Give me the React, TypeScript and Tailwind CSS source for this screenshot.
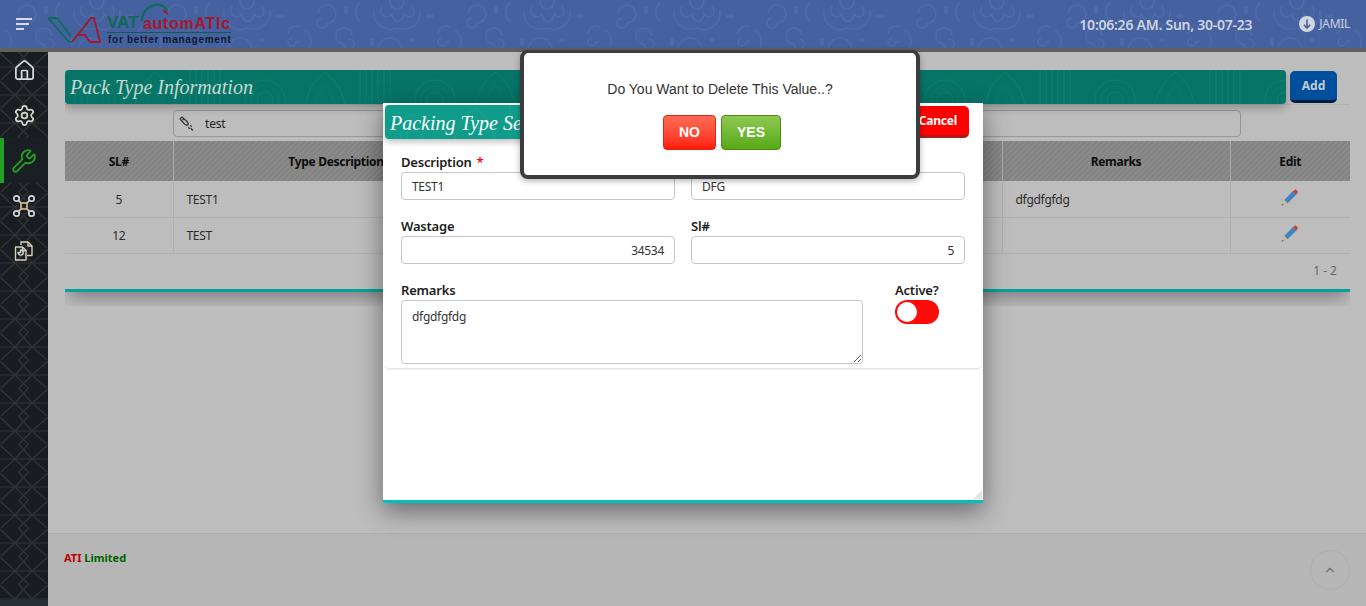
import React from "react";
import { Home, Settings, Wrench, ChevronUp } from "lucide-react";

function HeaderPattern() {
  return (
    <svg className="absolute inset-0 w-full h-full" aria-hidden="true">
      <defs>
        <pattern id="hp" width="150" height="52" patternUnits="userSpaceOnUse">
          <g fill="none" stroke="#5069a8" strokeWidth="1.5">
            <circle cx="97" cy="2" r="7" />
            <path d="M82 6C78 16 88 20 92 14C94 24 102 24 104 14C108 20 118 16 112 6" />
            <path d="M74 10C72 26 88 32 97 28C106 32 122 26 120 10" />
            <path d="M18 14a9 9 0 1 1 9 9a5 5 0 1 1-5-5" />
            <path d="M52 36a8 8 0 1 0-8 8a5 5 0 1 0 5-5" />
            <path d="M138 34a8 8 0 1 1 8 8a4 4 0 1 1-4-4" />
            <path d="M60 2c-6 8-6 14 0 20 M5 30c6 4 8 12 4 20" />
            <path d="M78 50a12 12 0 0 1 24 0" />
          </g>
          <g fill="#5069a8">
            <ellipse cx="72" cy="42" rx="2" ry="4" />
            <ellipse cx="130" cy="16" rx="4" ry="2" />
            <ellipse cx="46" cy="10" rx="2" ry="4" />
            <ellipse cx="112" cy="40" rx="3" ry="2" />
          </g>
        </pattern>
      </defs>
      <rect width="100%" height="100%" fill="url(#hp)" />
    </svg>
  );
}

function SidebarPattern() {
  return (
    <svg className="absolute inset-0 w-full h-full" aria-hidden="true">
      <defs>
        <pattern id="sp" width="48" height="28" patternUnits="userSpaceOnUse">
          <g fill="none" stroke="#313437" strokeWidth="1.2">
            <path d="M0 15H48" />
            <path d="M0 1L15 15L0 29 M48 1L32 15L48 29" />
            <path d="M15 15L32 -4 M32 15L15 -4 M15 15L32 32 M32 15L15 32" />
          </g>
        </pattern>
      </defs>
      <rect width="100%" height="100%" fill="url(#sp)" />
    </svg>
  );
}

function TealPattern({ id, stroke }: { id: string; stroke: string }) {
  return (
    <svg className="absolute inset-0 w-full h-full" aria-hidden="true">
      <defs>
        <pattern id={id} width="170" height="36" patternUnits="userSpaceOnUse">
          <g fill="none" stroke={stroke} strokeWidth="0.8">
            <circle cx="30" cy="30" r="20" />
            <circle cx="30" cy="30" r="14" strokeDasharray="1.5 2" />
            <circle cx="30" cy="30" r="8" />
            <path d="M70 36C74 14 84 8 90 2C96 8 106 14 110 36" />
            <path d="M80 36C84 22 88 18 90 14C92 18 96 22 100 36" strokeDasharray="1.5 2" />
            <path d="M125 0V36M131 0V36M137 0V36M143 0V36M149 0V36M155 0V36" />
          </g>
        </pattern>
      </defs>
      <rect width="100%" height="100%" fill={`url(#${id})`} />
    </svg>
  );
}

function Logo() {
  return (
    <div className="relative ml-[16px] w-[184px] h-[48px] shrink-0">
      <svg className="absolute left-0 top-0" width="184" height="48" viewBox="0 0 184 48" fill="none" aria-hidden="true">
        <path d="M0 18H9L23 36M0 18L21 42H24L43 18" stroke="#0d6d58" strokeWidth="1.8" strokeLinejoin="round" />
        <path d="M24 42L43 18H46L52 42H42L37 35H30" stroke="#a5182b" strokeWidth="1.8" strokeLinejoin="round" />
        <path d="M94 21C94 9 105 3 113 5C116 6 118 8 119 11" stroke="#0d6d58" strokeWidth="2.2" />
        <path d="M115 10L120 14" stroke="#a5182b" strokeWidth="2" />
        <path d="M59 32.5H183" stroke="#0d5d55" strokeWidth="1" />
      </svg>
      <span className="absolute left-[59px] top-[14px] text-[17px] leading-[18px] font-bold text-[#0c6a55] font-['Liberation_Sans',sans-serif]">VAT</span>
      <span className="absolute left-[95px] top-[15px] text-[16px] leading-[18px] font-bold text-[#a5182b] tracking-[0.7px] font-['Liberation_Sans',sans-serif]">automATIc</span>
      <span className="absolute left-[60px] top-[33px] text-[10px] leading-[13px] font-bold text-[#0d1a30] tracking-[0.72px] whitespace-nowrap font-['Liberation_Sans',sans-serif]">for better management</span>
    </div>
  );
}

function NetworkIcon() {
  return (
    <svg width="24" height="24" viewBox="0 0 24 24" fill="none" stroke="#cfd8dc" strokeWidth="1.7">
      <circle cx="4.5" cy="4.5" r="2.7" />
      <circle cx="19.5" cy="4.5" r="2.7" />
      <circle cx="4.5" cy="19.5" r="2.7" />
      <circle cx="19.5" cy="19.5" r="2.7" />
      <path d="M6.5 6.5L9 9M17.5 6.5L15 9M6.5 17.5L9 15M17.5 17.5L15 15" />
      <rect x="9" y="9" width="6" height="6" stroke="#d6b88a" />
    </svg>
  );
}

function FilesIcon() {
  return (
    <svg width="20" height="20" viewBox="0 0 20 20" fill="none" stroke="#d8cdb8" strokeWidth="1.4" strokeLinejoin="round">
      <path d="M7 4V1H14L18 5V14.5H13" />
      <path d="M14 1V5H18" />
      <path d="M1.5 6H8.5L12 9.5V19H1.5Z" />
      <path d="M8.5 6V9.5H12" />
      <path d="M4 11.5a2.6 2.6 0 1 0 2.6 -2.6V11.5Z" stroke="#cfd8dc" />
    </svg>
  );
}

function FlashlightIcon() {
  return (
    <svg width="16" height="16" viewBox="0 0 16 16" fill="none" stroke="#333" strokeWidth="1.2">
      <path d="M1 3L3 1L8 5.5L9.5 8L8 9.5L5.5 8Z" />
      <path d="M3.5 4L5 2.7" />
      <path d="M11 9.5L13 10.5M9.5 11L10.5 13M11.5 12L14 14.5" />
    </svg>
  );
}

function PencilIcon() {
  return (
    <svg width="18" height="18" viewBox="0 0 18 18" aria-hidden="true">
      <path d="M4.2 10.9L12.8 2.3L16.2 5.7L7.6 14.3Z" fill="#3f83c4" />
      <path d="M12.8 2.3L14.6 .9C15.2 .5 15.9 .5 16.4 1L17.4 2C17.9 2.6 17.9 3.4 17.4 4L16.2 5.7Z" fill="#c9403a" />
      <path d="M4.2 10.9L7.6 14.3L2.6 16.1L2.2 15.7Z" fill="#cdb98c" />
      <path d="M2.9 14.9L3.8 15.8L1.4 16.8Z" fill="#33383c" />
    </svg>
  );
}

function NavItem({ children, active }: { children: React.ReactNode; active?: boolean }) {
  return (
    <div className={active ? "relative h-[45px] flex items-center justify-center bg-[#1a1f23] border-l-4 border-[#22a122] pr-1" : "relative h-[45px] flex items-center justify-center"}>
      {children}
    </div>
  );
}

const labelCls = "h-[20px] text-[13px] leading-[20px] font-semibold tracking-[-0.2px] text-[#1c1c1c]";

function Field({ label, value, right, star }: { label: string; value: string; right?: boolean; star?: boolean }) {
  return (
    <div className="flex-1 min-w-0">
      <div className={labelCls}>
        {label}
        {star && <span className="text-[#f00] ml-[5px]">*</span>}
      </div>
      <div className={right ? "h-[28px] rounded border border-[#c6c6c6] px-[10px] text-[12px] leading-[27px] tracking-[-0.3px] text-[#333] text-right" : "h-[28px] rounded border border-[#c6c6c6] px-[10px] text-[12px] leading-[27px] tracking-[-0.3px] text-[#333]"}>
        {value}
      </div>
    </div>
  );
}

export default function App() {
  const th = "border-r border-[#a9a9a9] pt-[1px] text-[12px] font-bold tracking-[-0.3px] text-[#0c0c0c] text-center";
  const td = "border-r border-b border-[#b0b0b0] pt-[2px] text-[12px] tracking-[-0.3px] text-[#2b2b2b]";
  const rows = [
    { sl: "5", desc: "TEST1", rem: "dfgdfgfdg" },
    { sl: "12", desc: "TEST", rem: "" },
  ];
  return (
    <div className="relative w-[1366px] h-[606px] overflow-hidden bg-[#bdbdbd] font-['Noto_Sans',sans-serif]">
      <header className="relative h-[52px] bg-[#45619f] border-b-4 border-[#606060] flex items-center overflow-hidden">
        <HeaderPattern />
        <svg className="relative ml-[16px] shrink-0" width="16" height="14" viewBox="0 0 16 14" stroke="#d5dae6" strokeWidth="2" aria-hidden="true">
          <path d="M0 2H16M0 7H13M0 12H8" />
        </svg>
        <div className="relative"><Logo /></div>
        <div className="relative ml-auto text-[14px] font-semibold tracking-[-0.25px] text-[#ced5e2] whitespace-nowrap">10:06:26 AM. Sun, 30-07-23</div>
        <svg className="relative ml-[47px] shrink-0" width="16" height="16" viewBox="0 0 16 16" aria-hidden="true">
          <circle cx="8" cy="8" r="8" fill="#d2d6de" />
          <path d="M8 3.5V12M4.8 8.8L8 12L11.2 8.8" fill="none" stroke="#45619f" strokeWidth="1.6" />
        </svg>
        <div className="relative ml-[4px] mr-[16px] text-[12px] tracking-[-0.3px] text-[#c9d1e0]">JAMIL</div>
      </header>

      <div className="flex h-[554px]">
        <aside className="relative w-[48px] shrink-0 bg-[#191d21] flex flex-col">
          <SidebarPattern />
          <div className="relative -mt-[4px] flex flex-col">
            <NavItem><Home size={23} strokeWidth={1.8} color="#d5dde0" /></NavItem>
            <NavItem><Settings size={23} strokeWidth={1.8} color="#d8d8cc" /></NavItem>
            <NavItem active><Wrench size={26} strokeWidth={1.7} color="#25a025" /></NavItem>
            <NavItem><NetworkIcon /></NavItem>
            <NavItem><FilesIcon /></NavItem>
          </div>
          <div className="absolute left-0 right-0 bottom-0 h-[6px] bg-[#272f36]" />
        </aside>

        <main className="flex-1 min-w-0 flex flex-col">
          <div className="mt-[18px] ml-[17px] mr-[16px] h-[236px] overflow-hidden">
            <section className="h-[222px] flex flex-col shadow-[0_10px_16px_-4px_rgba(0,0,0,0.32)] bg-[#bdbdbd]">
              <div className="flex h-[34px] shrink-0">
                <div className="relative w-[1221px] h-[34px] rounded-[4px] bg-[#067568] overflow-hidden shadow-[0_4px_8px_rgba(0,0,0,0.25)]">
                  <TealPattern id="tp1" stroke="#127f70" />
                  <div className="relative pl-[5px] text-[20px] leading-[34px] italic text-[#c6d8d2] font-['Liberation_Serif',serif]">Pack Type Information</div>
                </div>
                <button className="ml-[4px] mt-[1px] w-[47px] h-[32px] rounded-[5px] bg-[#004f9c] border-b-[3px] border-[#001b3b] text-[12px] font-bold text-[#c4cbd6]">Add</button>
              </div>
              <div className="h-[37px] shrink-0 border-t border-[#b2b2b2] pl-[108px] pt-[5px]">
                <div className="w-[1068px] h-[27px] rounded border border-[#979797] flex items-center pl-[5px]">
                  <FlashlightIcon />
                  <span className="ml-[10px] text-[12px] tracking-[-0.2px] text-[#222]">test</span>
                </div>
              </div>
              <table className="w-full table-fixed border-collapse">
                <colgroup>
                  <col className="w-[108px]" />
                  <col className="w-[326px]" />
                  <col className="w-[503px]" />
                  <col className="w-[228px]" />
                  <col className="w-[120px]" />
                </colgroup>
                <thead>
                  <tr className="h-[40px] bg-[repeating-linear-gradient(135deg,#8b8b8b_0px,#828282_2px,#8d8d8d_4px)]">
                    <th className={th}>SL#</th>
                    <th className={th}>Type Description</th>
                    <th className={th}></th>
                    <th className={th}>Remarks</th>
                    <th className="pt-[1px] text-[12px] font-bold tracking-[-0.3px] text-[#0c0c0c] text-center">Edit</th>
                  </tr>
                </thead>
                <tbody>
                  {rows.map((r) => (
                    <tr key={r.sl} className="h-[36px]">
                      <td className={td + " text-center"}>{r.sl}</td>
                      <td className={td + " pl-[13px]"}>{r.desc}</td>
                      <td className={td}></td>
                      <td className={td + " pl-[13px]"}>{r.rem}</td>
                      <td className="border-b border-[#b0b0b0]">
                        <div className="flex justify-center pr-[2px] -mt-[2px]"><PencilIcon /></div>
                      </td>
                    </tr>
                  ))}
                </tbody>
              </table>
              <div className="h-[35px] shrink-0 flex items-center justify-end pr-[13px] text-[12px] text-[#6e6464]">1 - 2</div>
              <div className="h-[3px] shrink-0 bg-[#08a09d]" />
            </section>
          </div>

          <footer className="mt-auto h-[73px] border-t border-[#adadad] bg-[#b6b6b6] flex items-center justify-between pl-[16px] pr-[16px]">
            <div className="-mt-[24px] text-[11px] font-bold">
              <span className="text-[#c00000]">ATI</span> <span className="text-[#006400]">Limited</span>
            </div>
            <div className="w-[40px] h-[40px] rounded-full border border-[#adadad] flex items-center justify-center">
              <ChevronUp size={14} color="#6a7280" />
            </div>
          </footer>
        </main>
      </div>

      {/* Edit modal */}
      <div className="absolute left-[383px] top-[103px] w-[600px] h-[400px] bg-white border-b-[3px] border-[#00c0c0] shadow-[0_8px_24px_rgba(0,0,0,0.45)] flex flex-col">
        <div className="flex h-[36px] pt-[2px] pl-[2px] pr-[14px]">
          <div className="relative w-[520px] h-[34px] rounded-[4px] bg-[#0f9c8a] overflow-hidden shadow-[0_3px_6px_rgba(0,0,0,0.25)]">
            <TealPattern id="tp2" stroke="#1ba491" />
            <div className="relative pl-[5px] text-[20px] leading-[36px] italic text-white font-['Liberation_Serif',serif]">Packing Type Setup</div>
          </div>
          <button className="ml-auto mt-[1px] w-[62px] h-[32px] rounded-[5px] bg-[#ff0000] border-b-[3px] border-[#b01818] text-[12px] font-bold tracking-[-0.2px] text-white">Cancel</button>
        </div>
        <div className="mx-[2px] h-[230px] rounded-b border-b border-[#e4e4e4] shadow-[0_1px_2px_rgba(0,0,0,0.06)] px-[16px] pt-[13px]">
          <div className="flex gap-[16px]">
            <Field label="Description" value="TEST1" star />
            <Field label="Short Name" value="DFG" />
          </div>
          <div className="mt-[16px] flex gap-[16px]">
            <Field label="Wastage" value="34534" right />
            <Field label="Sl#" value="5" right />
          </div>
          <div className="mt-[16px] flex">
            <div className="w-[462px]">
              <div className={labelCls}>Remarks</div>
              <textarea readOnly defaultValue="dfgdfgfdg" className="block w-full h-[64px] rounded border border-[#c6c6c6] px-[10px] py-[7px] text-[12px] leading-[18px] tracking-[-0.3px] text-[#333] outline-none" />
            </div>
            <div className="ml-[32px]">
              <div className={labelCls}>Active?</div>
              <div className="w-[44px] h-[24px] rounded-full bg-[#ff0a0a] flex items-center pl-[2px]">
                <div className="w-[20px] h-[20px] rounded-full bg-white" />
              </div>
            </div>
          </div>
        </div>
        <svg className="absolute right-[1px] bottom-[1px]" width="9" height="9" viewBox="0 0 9 9" aria-hidden="true">
          <path d="M9 0V9H0Z" fill="#e2e2e2" />
        </svg>
      </div>

      {/* Confirm dialog */}
      <div className="absolute left-[520px] top-[50px] w-[400px] h-[129px] rounded-[8px] bg-white border-x-4 border-t-[3px] border-b-4 border-[#3c3c3c] shadow-[0_2px_6px_rgba(0,0,0,0.3)] flex flex-col items-center font-['Liberation_Sans',sans-serif]">
        <div className="mt-[28px] h-[16px] text-[14px] leading-[16px] text-[#333]">Do You Want to Delete This Value..?</div>
        <div className="mt-[18px] ml-[4px] flex gap-[5px]">
          <button className="w-[53px] h-[35px] rounded-[4px] border border-[#e8230f] bg-gradient-to-b from-[#ff6a55] to-[#ff1500] text-[14px] font-bold text-white">NO</button>
          <button className="w-[60px] h-[35px] rounded-[4px] border border-[#4d8a12] bg-gradient-to-b from-[#8fc850] to-[#55aa10] text-[14px] font-bold text-white">YES</button>
        </div>
      </div>
    </div>
  );
}
